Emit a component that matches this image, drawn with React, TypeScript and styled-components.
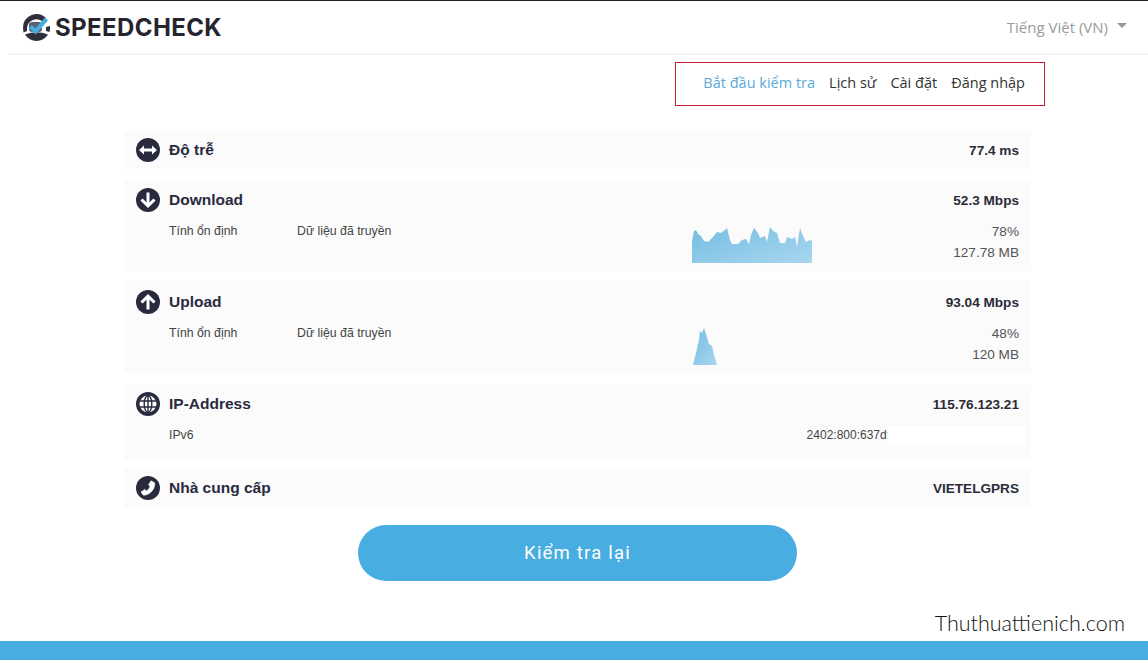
import React from 'react'
import styled, { createGlobalStyle } from 'styled-components'

const GlobalStyle = createGlobalStyle`
  html, body {
    margin: 0;
    padding: 0;
    height: 660px;
    overflow: hidden;
    background: #fff;
    font-family: 'Liberation Sans', Arial, sans-serif;
  }
`

const DARK = '#2a2a3e'
const BLUE = '#48aee2'

const Page = styled.div`
  width: 1148px;
  height: 660px;
  border-top: 1px solid #222;
  box-sizing: border-box;
  display: flex;
  flex-direction: column;
`

const Header = styled.header`
  height: 52px;
  flex: none;
  margin-left: 8px;
  padding: 0 21px 0 14px;
  border-bottom: 2px solid #f3f3f3;
  display: flex;
  align-items: center;
  justify-content: space-between;
  box-sizing: content-box;
`

const Brand = styled.div`
  display: flex;
  align-items: center;
  gap: 4px;
`

const BrandName = styled.span`
  font-family: Inter, sans-serif;
  font-weight: 700;
  font-size: 24px;
  letter-spacing: 0.4px;
  color: #25252f;
`

const Lang = styled.div`
  display: flex;
  align-items: center;
  gap: 9px;
  font-family: 'Open Sans', sans-serif;
  font-size: 15px;
  color: #9a9a9a;
`

const Caret = styled.span`
  width: 0;
  height: 0;
  margin-top: -3px;
  border-left: 5px solid transparent;
  border-right: 5px solid transparent;
  border-top: 5px solid #999;
`

const Nav = styled.nav`
  width: 370px;
  height: 44px;
  margin: 7px 0 25px 675px;
  padding: 0 19px 3px 0;
  box-sizing: border-box;
  flex: none;
  border: 1px solid #c0232f;
  display: flex;
  align-items: center;
  justify-content: flex-end;
  gap: 14px;
  font-family: 'Open Sans', sans-serif;
  font-size: 14.5px;
`

const NavLink = styled.a<{ $active?: boolean }>`
  color: ${(p) => (p.$active ? '#5aa9d6' : '#333')};
`

const Results = styled.main`
  width: 907px;
  margin-left: 124px;
  flex: none;
  display: flex;
  flex-direction: column;
`

const Row = styled.section<{ $top: number; $height: number; $gap: number }>`
  height: ${(p) => p.$height}px;
  margin-bottom: ${(p) => p.$gap}px;
  padding: ${(p) => p.$top}px 12px 0;
  box-sizing: border-box;
  background: #fbfbfc;
`

const RowHead = styled.div`
  height: 24px;
  display: flex;
  align-items: center;
  gap: 9px;
`

const Title = styled.h3`
  margin: 0;
  font-size: 15.5px;
  font-weight: 700;
  color: ${DARK};
`

const Value = styled.strong`
  margin-left: auto;
  font-size: 13.6px;
  color: #2b2b38;
`

const Detail = styled.div`
  margin-top: 11px;
  padding-left: 33px;
  display: grid;
  grid-template-columns: 128px 395px 120px 1fr;
  font-size: 12.3px;
  line-height: 16px;
  color: #444;
`

const ChartWrap = styled.div<{ $top: number; $left: number }>`
  margin: ${(p) => p.$top}px 0 0 ${(p) => p.$left}px;
`

const ChartSvg = styled.svg`
  display: block;
`

const Metrics = styled.div`
  margin-top: -2px;
  text-align: right;
  font-size: 13.6px;
  line-height: 21px;
  color: #555;
`

const IpDetail = styled.div`
  margin-top: 11px;
  padding-left: 33px;
  display: flex;
  font-size: 12.3px;
  line-height: 16px;
  color: #444;
`

const IpValue = styled.span`
  margin-left: 613px;
  font-size: 12px;
  white-space: nowrap;
  flex: none;
`

const Masked = styled.span`
  width: 137px;
  height: 18px;
  margin: -1px 0 0 -2px;
  flex: none;
  background: #fff;
`

const RetestButton = styled.button`
  width: 439px;
  height: 56px;
  margin: 17px 0 0 358px;
  flex: none;
  border: 0;
  border-radius: 28px;
  background: ${BLUE};
  color: #fff;
  font-family: Roboto, sans-serif;
  font-size: 18.5px;
  font-weight: 400;
  letter-spacing: 1.2px;
`

const Watermark = styled.div`
  flex: 1;
  padding: 0 23px 4px 0;
  display: flex;
  align-items: flex-end;
  justify-content: flex-end;
  font-family: Lato, sans-serif;
  font-weight: 300;
  font-size: 21.5px;
  line-height: 28px;
  color: #111;
`

const Footer = styled.footer`
  height: 19px;
  flex: none;
  background: ${BLUE};
`

const Logo = () => (
  <svg width="29" height="29" viewBox="0 0 29 29">
    {/* upper ring */}
    <path
      d="M1 15 A13.5 13.5 0 0 1 24 5 L21 9 A9.5 9.5 0 0 0 5 15 L5 18 L1.5 19.5 Z"
      fill="#2f2f3d"
    />
    <path d="M28 13 A13.5 13.5 0 0 1 27.5 19 L24 18 L24 14 Z" fill="#2f2f3d" />
    {/* lower segment */}
    <path d="M3 21.5 Q14.5 17 26 21.5 A13.5 13.5 0 0 1 3 21.5 Z" fill="#2f2f3d" />
    <rect x="7" y="9" width="13" height="10" rx="3" fill="#5b5f73" />
    <path d="M8.5 13.5 L13.5 18.5 L24.5 6" fill="none" stroke={BLUE} strokeWidth="4.2" />
  </svg>
)

const IconCircle: React.FC<{ children: React.ReactNode }> = ({ children }) => (
  <svg width="24" height="24" viewBox="0 0 24 24">
    <circle cx="12" cy="12" r="12" fill={DARK} />
    {children}
  </svg>
)

const LatencyIcon = () => (
  <IconCircle>
    <path d="M3 12 L8 7.5 V10.5 H16 V7.5 L21 12 L16 16.5 V13.5 H8 V16.5 Z" fill="#fff" />
  </IconCircle>
)

const DownloadIcon = () => (
  <IconCircle>
    <path d="M12 4.5 V18 M5.5 11.5 L12 18 L18.5 11.5" fill="none" stroke="#fff" strokeWidth="3" />
  </IconCircle>
)

const UploadIcon = () => (
  <IconCircle>
    <path d="M12 19.5 V6 M5.5 12.5 L12 6 L18.5 12.5" fill="none" stroke="#fff" strokeWidth="3" />
  </IconCircle>
)

const GlobeIcon = () => (
  <IconCircle>
    <circle cx="12" cy="12" r="8.5" fill="#fff" />
    <g fill="none" stroke={DARK} strokeWidth="1.4">
      <ellipse cx="12" cy="12" rx="3.8" ry="8.5" />
      <path d="M12 3.5 V20.5 M3.5 9 H20.5 M3.5 15 H20.5" />
    </g>
  </IconCircle>
)

const PhoneIcon = () => (
  <IconCircle>
    <path
      d="M15 4.8 L18.6 6.8 C19.6 12.8 13.5 19.6 7.4 19.2 L5 16 L8.8 13.4 L10.4 15 C12.2 14 13.4 12.2 14 10.4 L12.6 8.8 Z"
      fill="#fff"
      stroke="#fff"
      strokeWidth="0.6"
      strokeLinejoin="round"
    />
  </IconCircle>
)

const downloadShape =
  '0,36 0,14 2,4 4,3 6,7 9,9 12,14 16,15 21,10 25,5 29,6 33,3 35,1 38,13 40,17 46,17 50,13 54,12 57,17 59,8 62,1 66,6 68,11 73,9 75,15 78,0 81,4 85,6 88,16 93,16 95,10 100,12 103,10 105,20 108,1 111,9 114,15 118,13 120,14 120,36'

const uploadShape = '0,37 3,25 6,12 7,3 9,5 11,0 13,6 16,16 19,18 21,27 24,37'

const AreaChart: React.FC<{ id: string; width: number; points: string }> = ({ id, width, points }) => (
  <ChartSvg width={width} height="37" viewBox={`0 0 ${width} 37`}>
    <defs>
      <linearGradient id={id} x1="0" y1="0" x2="1" y2="1">
        <stop offset="0" stopColor="#74bde3" />
        <stop offset="1" stopColor="#a9d6ee" />
      </linearGradient>
    </defs>
    <polygon points={points} fill={`url(#${id})`} />
  </ChartSvg>
)

export default function App() {
  return (
    <Page>
      <GlobalStyle />
      <Header>
        <Brand>
          <Logo />
          <BrandName>SPEEDCHECK</BrandName>
        </Brand>
        <Lang>
          Tiếng Việt (VN)
          <Caret />
        </Lang>
      </Header>

      <Nav>
        <NavLink $active>Bắt đầu kiểm tra</NavLink>
        <NavLink>Lịch sử</NavLink>
        <NavLink>Cài đặt</NavLink>
        <NavLink>Đăng nhập</NavLink>
      </Nav>

      <Results>
        <Row $top={7} $height={38} $gap={11}>
          <RowHead>
            <LatencyIcon />
            <Title>Độ trễ</Title>
            <Value>77.4 ms</Value>
          </RowHead>
        </Row>

        <Row $top={8} $height={91} $gap={9}>
          <RowHead>
            <DownloadIcon />
            <Title>Download</Title>
            <Value>52.3 Mbps</Value>
          </RowHead>
          <Detail>
            <span>Tính ổn định</span>
            <span>Dữ liệu đã truyền</span>
            <ChartWrap $top={4} $left={0}>
              <AreaChart id="download-fill" width={120} points={downloadShape} />
            </ChartWrap>
            <Metrics>
              78%
              <br />
              127.78 MB
            </Metrics>
          </Detail>
        </Row>

        <Row $top={10} $height={93} $gap={12}>
          <RowHead>
            <UploadIcon />
            <Title>Upload</Title>
            <Value>93.04 Mbps</Value>
          </RowHead>
          <Detail>
            <span>Tính ổn định</span>
            <span>Dữ liệu đã truyền</span>
            <ChartWrap $top={3} $left={1}>
              <AreaChart id="upload-fill" width={24} points={uploadShape} />
            </ChartWrap>
            <Metrics>
              48%
              <br />
              120 MB
            </Metrics>
          </Detail>
        </Row>

        <Row $top={7} $height={74} $gap={9}>
          <RowHead>
            <GlobeIcon />
            <Title>IP-Address</Title>
            <Value>115.76.123.21</Value>
          </RowHead>
          <IpDetail>
            <span>IPv6</span>
            <IpValue>2402:800:637d:</IpValue>
            <Masked />
          </IpDetail>
        </Row>

        <Row $top={8} $height={40} $gap={0}>
          <RowHead>
            <PhoneIcon />
            <Title>Nhà cung cấp</Title>
            <Value>VIETELGPRS</Value>
          </RowHead>
        </Row>
      </Results>

      <RetestButton>Kiểm tra lại</RetestButton>
      <Watermark>Thuthuattienich.com</Watermark>
      <Footer />
    </Page>
  )
}
